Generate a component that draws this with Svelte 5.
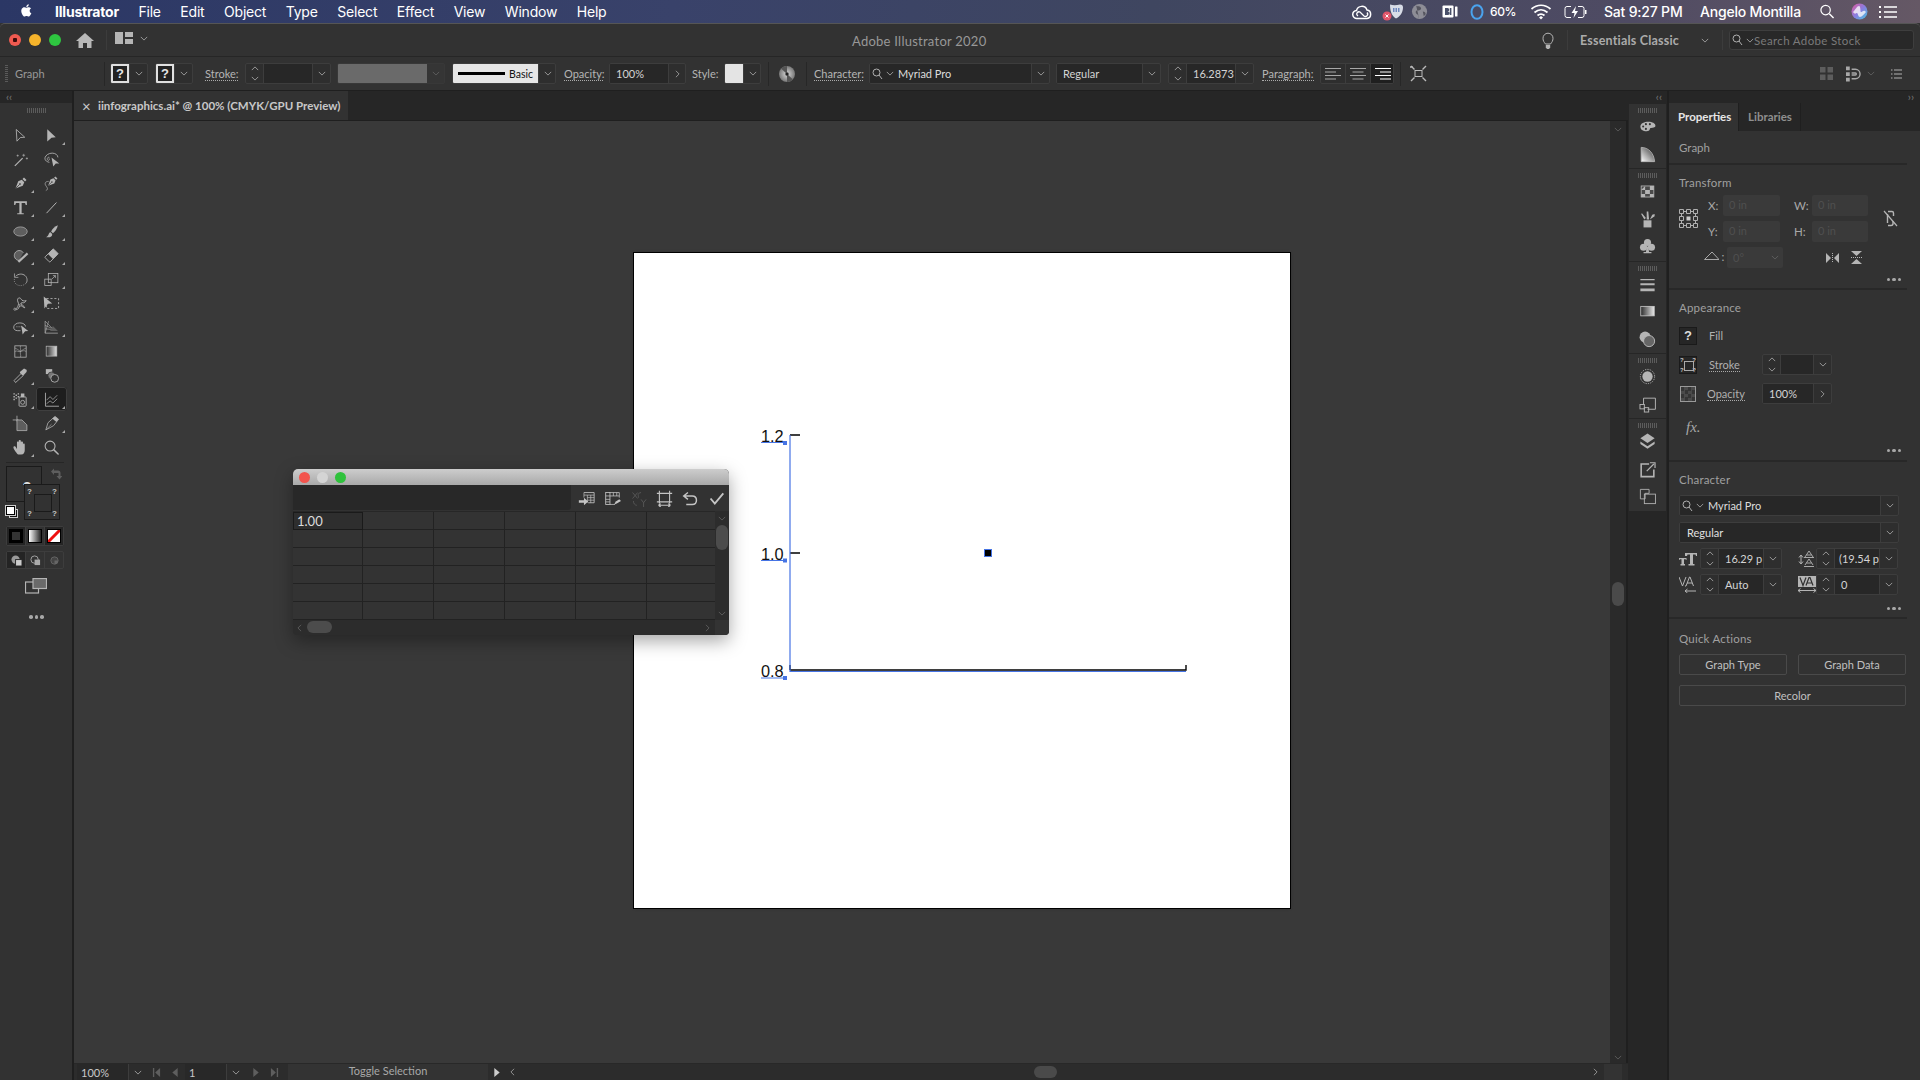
<script>
  const fs = 'fill="currentColor"';
  const st = 'fill="none" stroke="currentColor"';
  const pen = `<g transform="rotate(45 12 12)"><path d="M12 22 7.5 12 9.5 7h5l2 5z" ${fs}/><rect x="9.5" y="2.5" width="5" height="3" ${fs}/><path d="M12 22v-8" stroke="#323232"/><circle cx="12" cy="13" r="1.2" fill="#323232"/></g>`;
  const tools = [
    { svg: `<path d="M6 3.5 18 14.5l-6.2.4L7 20z" ${st} stroke-width="1.2"/>` },
    { svg: `<path d="M6 3 18 14.5l-6 .5-6 5.5z" ${fs}/>`, fly: true },
    { svg: `<path d="M4 21 15 10" ${st} stroke-width="1.7"/><path d="M16.5 4v4M14.5 6h4M8 5v3M6.5 6.5h3M21 9v3M19.5 10.5h3" ${st} stroke-width=".9"/>` },
    { svg: `<path d="M9 16C4 15 2 12 3 9s5-6 10-6 8 3 8 6" ${st} stroke-width="1.2"/><path d="M9 9c-3-1-4 3-2 4s3-2 1-3" ${st}/><path d="M12 9 23 17.5l-5 .3-3.5 4.2z" ${fs}/>` },
    { svg: pen, fly: true },
    { svg: `<g transform="translate(3 -1) scale(.85)">${pen}</g><path d="M8 9C3 9 2 12 4 15s4 5 0 7" ${st}/>` },
    { svg: `<path d="M3 3h18v5.5h-1.6l-1-3H13.6V20h3v1.6H7.4V20h3V5.5H5.6l-1 3H3z" ${fs}/>`, fly: true },
    { svg: `<path d="M5 20 19 5" ${st} stroke-width="1.4"/>`, fly: true },
    { svg: `<ellipse cx="12" cy="12" rx="9.5" ry="6.5" fill="#5e5e5e" stroke="currentColor"/>`, fly: true },
    { svg: `<path d="M21 3c-4 1-8 5-9.5 9l2.5 2.5C17 12 20 8 21 3z" ${fs}/><path d="M10.5 13c-3 1-2 5-6 7 5 1 9-1 8.5-4.500z" ${fs}/>`, fly: true },
    { svg: `<path d="M16 8a7 7 0 1 0-6 11" fill="#5e5e5e" stroke="currentColor" stroke-width="1.2"/><path d="M9 21 22 9" ${st} stroke-width="3"/>`, fly: true },
    { svg: `<g transform="rotate(-45 12 12)"><rect x="3.500" y="7" width="17" height="10" rx="1" ${st} stroke-width="1.2"/><path d="M10 7h10.500v10H10z" ${fs}/></g>`, fly: true },
    { svg: `<path d="M5 7.500C9 3.500 15 3.500 18.500 6.500s3.500 8.500 1 11" ${st} stroke-width="1.2"/><path d="M19 18c-3 3-9 3.500-12.500 1S2.500 13 4 10" ${st} stroke-dasharray="1.2 1.800"/><path d="M3.500 3.500V9H9" ${st}/>`, fly: true },
    { svg: `<rect x="2.500" y="11.500" width="9" height="9" ${st} stroke-width="1.1"/><rect x="7.500" y="3.500" width="13.500" height="13" ${st} stroke-width="1.1"/><path d="M12.500 11.500l5-5M14 6.500h3.500V10" ${st}/>`, fly: true },
    { svg: `<path d="M3 20c3 1 5-3 6-6s-2-5-1-8 4-2 5 0 4 3 7 2c-1 2-3 3-4 3s-3-1-3 1 4 3 5 6c-2 0-4-3-6-3s-2 4-4 5-4 1-5 0z" ${st} stroke-width="1.3"/><circle cx="4" cy="20" r="1.500" fill="#323232" stroke="currentColor"/><circle cx="12" cy="14" r="1.500" fill="#323232" stroke="currentColor"/>`, fly: true },
    { svg: `<rect x="5" y="5" width="17" height="14" ${st} stroke-dasharray="3 2.500" stroke-width="1.2"/><path d="M1 2 13 12l-6 .5L2 19z" ${fs}/>` },
    { svg: `<path d="M12 16.500H8C4 16.500 2 14 2.500 11S6 5.500 11 5.500s8 2.500 8 5" ${st} stroke-width="1.2"/><circle cx="7" cy="11" r=".8" ${fs}/><circle cx="10" cy="11" r=".8" ${fs}/><circle cx="13" cy="11" r=".8" ${fs}/><path d="M13 9 23 17l-4.500.4L15 22z" ${fs}/>`, fly: true },
    { svg: `<path d="M3 3v17h18" ${st}/><path d="M3 3 13 13M8 3l-5 17M3 9l9 4M3 14l14 1" ${st} stroke-width=".8"/><path d="M14 10 21 17H10z" fill="#5e5e5e"/>`, fly: true },
    { svg: `<rect x="4" y="4" width="16" height="16" ${st} stroke-width="1.1"/><path d="M12 4c-1 3 1 5 0 8s1 5 0 8M4 12c3-2 5 1 8 0s5-2 8 0M4 7c3 1 5 3 8 5M20 7c-3 1-5 3-8 5" ${st} stroke-width=".8"/>` },
    { svg: `<defs><linearGradient id="tg"><stop offset="0" stop-color="#2a2a2a"/><stop offset="1" stop-color="#e0e0e0"/></linearGradient></defs><rect x="4.500" y="4.500" width="15" height="14" fill="url(#tg)" stroke="#bbb"/>` },
    { svg: `<path d="M5 22 3 19 13 9l3 3z" ${st} stroke-width="1.200"/><path d="M12 6.500 17 2l2 1 2 2-.500 2L17 11l-2 1-4-4z" ${fs}/>`, fly: true },
    { svg: `<path d="M4 3h9v7H4z" ${fs}/><circle cx="12" cy="12" r="5" fill="#777" stroke="#323232"/><circle cx="16.500" cy="16" r="5.500" fill="#323232" stroke="currentColor" stroke-width="1.200"/>` },
    { svg: `<path d="M2 7h2v2H2zM5 5h2v2H5zM8 7h2v2H8zM5 9h2v2H5zM2 11h2v2H2zM2 3h2v2H2zM8 3h2v2H8z" ${fs}/><rect x="10" y="8.500" width="10" height="13" rx="1" ${st} stroke-width="1.300"/><circle cx="15" cy="16" r="2.800" ${st} stroke-width="1.200"/><path d="M12.500 3.500h5v5h-5z" ${fs}/>`, fly: true },
    { svg: `<path d="M3.500 2.500v19h19" ${st} stroke-width="1.200"/><path d="M5 13l5-5 4 4 6-6M5 18l5-4 4 3 6-6" ${st}/>`, fly: true, active: true },
    { svg: `<path d="M1 7h8M7 1v8" ${st} stroke-width="1.100"/><path d="M7 7h7l7 7v8H7z" fill="#5e5e5e" stroke="currentColor" stroke-width="1.100"/>` },
    { svg: `<path d="M4 21 7 11 17 2l5 4-7 9z" ${st} stroke-width="1.100"/><path d="M13 5 17 2l5 4-3 4z" ${fs}/><path d="M5 20l7-7" ${st} stroke-width=".8"/>`, fly: true },
    { svg: `<path d="M7 20c-2-2-5-6-5-8s2-2 3-1l2 3V5c0-2 2.500-2 2.500 0V3c0-2 3-2 3 0v2c0-2 3-2 3 0v3c0-2 2.500-2 2.500 0v8c0 3-1.500 6-5 6h-3c-1.500 0-2.500-1-3.500-2z" ${fs}/>`, fly: true },
    { svg: `<circle cx="10" cy="10" r="7" ${st} stroke-width="1.500"/><path d="M15 15l7 7" ${st} stroke-width="2"/>` }
  ];
  const dockGroups = [
    [
      `<path d="M3 12c0-4 5-6 10-6s9 2 9 5-4 2-6 3 0 4-5 4-8-2-8-6z" ${fs}/><circle cx="15" cy="9" r="1.300" fill="#323232"/><circle cx="10" cy="9" r="1.300" fill="#323232"/><circle cx="6.500" cy="12" r="1.300" fill="#323232"/><circle cx="10" cy="15" r="1.300" fill="#323232"/>`,
      `<defs><linearGradient id="fan" x1="0" y1="1" x2="1" y2="0"><stop offset="0" stop-color="#fff"/><stop offset="1" stop-color="#333"/></linearGradient></defs><path d="M4 3c9 0 16 7 17 18H4z" fill="url(#fan)" stroke="#bbb"/>`
    ],
    [
      `<rect x="4" y="5" width="16" height="14" fill="#4a4a4a" stroke="#bbb"/><path d="M9 5v5H4zM15 10h5V5h-5zM4 15h5v4H4zM9 10h6v5H9zM15 15h5v4h-5z" ${fs}/>`,
      `<path d="M7 13h10v9H7z" ${fs}/><path d="M8 12 4 5l1-1 5 6zM11 12 11 2h2l1 10zM15 12l3-6 3-1 0 3z" ${fs}/>`,
      `<circle cx="12" cy="7" r="4.500" ${fs}/><circle cx="7" cy="13" r="4.500" ${fs}/><circle cx="17" cy="13" r="4.500" ${fs}/><path d="M11 12h2l1 7h3v1.500H7V19h3z" ${fs}/>`
    ],
    [
      `<path d="M3 5h18v1.500H3zM3 10.500h18v2.500H3zM3 17h18v3.500H3z" ${fs}/>`,
      `<defs><linearGradient id="dg"><stop offset="0" stop-color="#2a2a2a"/><stop offset="1" stop-color="#e8e8e8"/></linearGradient></defs><rect x="3.500" y="5.500" width="17" height="12" fill="url(#dg)" stroke="#ccc"/>`,
      `<circle cx="9" cy="9" r="7" ${fs}/><circle cx="14" cy="14" r="7" fill="#666" stroke="#bbb" stroke-width="1.200"/>`
    ],
    [
      `<circle cx="12" cy="12" r="6.500" ${fs}/><circle cx="12" cy="12" r="9" ${st} stroke-dasharray="1.500 1.500" stroke-width="1.200"/>`,
      `<path d="M7 4h15v14H12" ${st} stroke-width="1.200"/><path d="M7 4v8" ${st} stroke-width="1.200"/><rect x="2.500" y="12" width="5.500" height="5.500" ${st} stroke-width="1.200"/><rect x="8" y="16" width="5.500" height="5.500" ${st} stroke-width="1.200"/>`
    ],
    [
      `<path d="M12 2 21 8l-9 6-9-6z" ${fs}/><path d="M3 12l9 6 9-6v3l-9 6-9-6z" ${fs}/>`,
      `<path d="M14 5H4v16h16V12" ${st} stroke-width="2"/><path d="M11 14 20 5M15 3.500h6.500V10" ${st} stroke-width="1.500"/>`,
      `<path d="M3 3h11v5H9v7H3z" ${st} stroke-width="1.100"/><rect x="8" y="9" width="14" height="12" ${st} stroke-width="1.100"/>`
    ]
  ];
  const gridRows = Array.from({ length: 6 }, (_, r) => r);
  const gridCols = Array.from({ length: 6 }, (_, c) => c);
  const gwIcons = [
    { svg: `<path d="M7 3h12v12H12" ${st}/><path d="M7 3v6M7 6h12M11 6v9M15 6v9M11 9h8M11 12h8" ${st} stroke-width=".8"/><path d="M1 12h6V9l5 4.500L7 18v-3H1z" ${fs}/>` },
    { svg: `<rect x="2" y="3" width="5" height="14" ${st}/><path d="M7 3h11v6M7 17h6M7 7h11M2 7h5M2 11h5M2 14h5M11 3v4M15 3v4" ${st} stroke-width=".9"/><path d="M13 14l5-3 2 2-5 3zM12 17l1.500-3 1.500 2z" ${fs}/>` },
    { svg: `<path d="M3 3l6 7M9 3l-6 7M13 11l3 4 3-4M16 15v5M4 13c0 3 2 5 4 5M10 9c0-3-2-5 3-6" ${st}/>`, dim: true },
    { svg: `<path d="M1 4h18M1 14h18M4 1v15M16 1v15M3 18h14M3 18l2.500-2M3 18l2.500 2M17 18l-2.500-2M17 18l-2.500 2" ${st} stroke-width="1.300"/>` },
    { svg: `<path d="M7 3 2 7l5 4M2 7h10c4 0 5 3 5 5s-1 5-5 5H5" ${st} stroke-width="1.700"/>` },
    { svg: `<path d="M3 10l5 6L18 4" ${st} stroke-width="2.200"/>` }
  ];
</script>

{#snippet chev(dim)}
  <svg class="chev" class:dimc={dim} viewBox="0 0 10 6"><path d="M1 1l4 4 4-4" /></svg>
{/snippet}
{#snippet spin()}
  <span class="spin"><svg class="chev" viewBox="0 0 10 6"><path d="M1 5l4-4 4 4" /></svg><svg class="chev" viewBox="0 0 10 6"><path d="M1 1l4 4 4-4" /></svg></span>
{/snippet}
{#snippet dots()}
  <div class="dots"><i></i><i></i><i></i></div>
{/snippet}
{#snippet mag()}
  <span class="mag"><svg viewBox="0 0 13 12"><circle cx="4.500" cy="4.500" r="3.500" /><path d="M7 7l3 4" /></svg>{@render chev()}</span>
{/snippet}
{#snippet qbox()}
  <span class="qbox">?</span>
{/snippet}
{#snippet grip()}
  <div class="grip"></div>
{/snippet}

<div class="app">
  <header class="menubar">
    <svg class="apple" viewBox="0 0 24 24"><path d="M17.050 12.540c-.03-2.500 2.040-3.700 2.130-3.760-1.160-1.700-2.970-1.930-3.610-1.960-1.540-.16-3 .9-3.780.9-.78 0-1.980-.88-3.260-.86-1.680.03-3.220.98-4.090 2.480-1.740 3.030-.45 7.500 1.250 9.950.83 1.200 1.820 2.550 3.120 2.500 1.250-.05 1.730-.81 3.240-.81 1.510 0 1.940.81 3.270.78 1.350-.02 2.200-1.220 3.020-2.430.95-1.390 1.340-2.740 1.370-2.810-.03-.01-2.630-1.010-2.660-4M14.600 5.170c.69-.84 1.150-2 1.030-3.170-.99.04-2.200.66-2.910 1.500-.64.74-1.200 1.930-1.050 3.060 1.110.09 2.240-.56 2.930-1.390" /></svg>
    <nav class="menus">
      <b>Illustrator</b><span>File</span><span>Edit</span><span>Object</span><span>Type</span><span>Select</span><span>Effect</span><span>View</span><span>Window</span><span>Help</span>
    </nav>
    <div class="extras">
      <svg class="x20" viewBox="0 0 20 16"><path d="M5 14.500a4 4 0 0 1-.5-8A5.500 5.500 0 0 1 15 6a4.300 4.300 0 0 1 0 8.500z" fill="none" stroke="#fff" stroke-width="1.500" /><path d="M6 12c-3-2 0-5 2-4l4 4c2 1.500 5-1 3-3.500" fill="none" stroke="#fff" stroke-width="1.300" /></svg>
      <svg class="x23 ml10" viewBox="0 0 23 18"><path d="M8 1.500c3 1 6 1 10 0 2 0 3 1 3 3 0 5-3 9-7 11-3-2-6-5-6-14z" fill="#d8dce6" /><path d="M11 6h7M11 8h7" stroke="#4b6bb0" stroke-width="1.500" stroke-dasharray="1.500 1" /><circle cx="5" cy="13" r="4.500" fill="#e0556a" /><path d="M3.500 11.500l3 3M6.500 11.500l-3 3" stroke="#fff" /></svg>
      <svg class="x17 ml6" viewBox="0 0 17 18"><circle cx="8.500" cy="9" r="8" fill="#8d8d96" /><path d="M5 3c2 1 4 0 5 2s-2 3-4 3-2 3 0 4 1 3 2 4M12 9c2 0 3 1 3 3l-2 2z" fill="#55555f" /></svg>
      <svg class="x16 ml14" viewBox="0 0 16 14"><rect x="0.500" y="1" width="11" height="12" rx="1" fill="#fff" /><path d="M3 3.500h2.500a1.400 1.400 0 0 1 0 3.500H3zM3 7h3a1.500 1.500 0 0 1 0 3.500H3z" fill="#49506a" /><rect x="7.800" y="3.500" width="1.600" height="7" fill="#49506a" /><rect x="13" y="2" width="2.500" height="10" rx=".5" fill="#fff" /></svg>
      <svg class="x14 ml12" viewBox="0 0 14 18"><ellipse cx="7" cy="9" rx="5.500" ry="6.800" fill="none" stroke="#4aa3ee" stroke-width="2" /></svg>
      <span class="xt t25 ml6">60%</span>
      <svg class="x22 ml15" viewBox="0 0 22 17"><path d="M1.500 6C7 1 15 1 20.500 6M4.500 9.500c4-3.500 9-3.500 13 0M7.500 12.500c2-1.700 5-1.700 7 0" fill="none" stroke="#fff" stroke-width="1.700" /><path d="M9 14.500l2-1.500 2 1.500-2 2z" fill="#fff" /></svg>
      <svg class="x23 ml12" viewBox="0 0 23 14"><path d="M7 1.500H3a2 2 0 0 0-2 2v7a2 2 0 0 0 2 2h4M14 1.500h4a2 2 0 0 1 2 2v7a2 2 0 0 1-2 2h-4" fill="none" stroke="#fff" /><path d="M12 1 7.500 8h3l-1 5 4.500-7h-3z" fill="#fff" /><rect x="21" y="5" width="1.500" height="4" fill="#fff" /></svg>
      <span class="xt t79 ml17">Sat 9:27 PM</span>
      <span class="xt t102 ml17">Angelo Montilla</span>
      <svg class="x16 ml17" viewBox="0 0 16 16"><circle cx="6.500" cy="6.500" r="5" fill="none" stroke="#fff" stroke-width="1.300" /><path d="M10.500 10.500 15 15" stroke="#fff" stroke-width="1.500" /></svg>
      <svg class="x17 ml16" viewBox="0 0 17 17"><defs><linearGradient id="siri" x1="0" y1="0" x2="1" y2="1"><stop offset="0" stop-color="#e05a9a" /><stop offset=".5" stop-color="#8a7de0" /><stop offset="1" stop-color="#45c4e0" /></linearGradient></defs><circle cx="8.500" cy="8.500" r="8" fill="url(#siri)" /><path d="M2 9c3-3 4-6 6-6s1 6 2 6 3-3 5 0c-2 2-4 5-6 5s-2-4-3-4-2 2-4-1z" fill="#fff" opacity=".75" /></svg>
      <svg class="x18 ml11" viewBox="0 0 18 14"><path d="M5 2h13M5 7h13M5 12h13" stroke="#fff" stroke-width="1.600" /><path d="M0 2h2M0 7h2M0 12h2" stroke="#fff" stroke-width="1.800" /></svg>
    </div>
  </header>

  <div class="titlebar">
    <div class="lights"><i class="red"></i><i class="amber"></i><i class="green"></i></div>
    <svg class="home" viewBox="0 0 18 15"><path d="M9 0 0 8h2.500v7H7v-5h4v5h4.500V8H18z" /></svg>
    <span class="tsep homesep"></span>
    <svg class="layout" viewBox="0 0 18 12"><path d="M0 0h8v12H0zM10 0h8v5h-8zM10 7h8v5h-8z" /></svg>
    <span class="layoutchev">{@render chev()}</span>
    <span class="apptitle">Adobe Illustrator 2020</span>
    <div class="tright">
      <svg class="bulb" viewBox="0 0 12 17"><path d="M3.500 12C2 10 1 9 1 6.200a5 5 0 0 1 10 0C11 9 10 10 8.500 12z" fill="none" stroke="#b5b5b5" /><path d="M3.800 13h4.400v2.500L7 17H5l-1.200-1.500z" fill="#b5b5b5" /></svg>
      <span class="tsep esep1"></span>
      <b class="essentials">Essentials Classic</b>
      <span class="echev">{@render chev()}</span>
      <span class="tsep esep2"></span>
      <div class="stock">{@render mag()}<span>Search Adobe Stock</span></div>
    </div>
  </div>

  <div class="controlbar">
    <span class="cgrip"></span>
    <span class="lab graphlab">Graph</span>
    <span class="csep"></span>
    <div class="ctl ml5 w38">{@render qbox()}<span class="cell c18">{@render chev()}</span></div>
    <div class="ctl ml7 w38">{@render qbox()}<span class="cell c18">{@render chev()}</span></div>
    <span class="lab ul ml12 w33">Stroke:</span>
    <div class="ctl ml7 w86"><span class="cell c18">{@render spin()}</span><span class="cell inp grow"></span><span class="cell c18">{@render chev()}</span></div>
    <div class="ctl ml6 w108 flat"><span class="gray"></span><span class="cell c18 off">{@render chev(true)}</span></div>
    <div class="ctl ml7 w104"><span class="basic"><i></i>Basic</span><span class="cell c18">{@render chev()}</span></div>
    <span class="lab ul ml8 w39">Opacity:</span>
    <div class="ctl ml6 w77"><span class="cell inp grow val">100%</span><span class="cell c17"><svg class="chev side" viewBox="0 0 6 10"><path d="M1 1l4 4-4 4" /></svg></span></div>
    <span class="lab ml6 w25">Style:</span>
    <div class="ctl ml7 w37"><span class="white"></span><span class="cell c18">{@render chev()}</span></div>
    <span class="csep ml7"></span>
    <svg class="ml10 disc" viewBox="0 0 16 16"><defs><radialGradient id="disc"><stop offset="0" stop-color="#444" /><stop offset=".3" stop-color="#bbb" /><stop offset="1" stop-color="#777" /></radialGradient></defs><circle cx="8" cy="8" r="8" fill="url(#disc)" /><path d="M8 8 2 2.500A8 8 0 0 1 8 0zM8 8l6 5.500A8 8 0 0 1 8 16z" fill="#555" /><circle cx="8" cy="8" r="1.500" fill="#222" /></svg>
    <span class="csep ml11"></span>
    <span class="lab ul ml7 w49">Character:</span>
    <div class="ctl ml6 w181"><span class="cell inp grow">{@render mag()}<span class="fontname">Myriad Pro</span></span><span class="cell c18">{@render chev()}</span></div>
    <div class="ctl ml6 w105"><span class="cell inp grow val">Regular</span><span class="cell c18">{@render chev()}</span></div>
    <div class="ctl ml7 w86"><span class="cell c18">{@render spin()}</span><span class="cell inp grow val">16.2873</span><span class="cell c18">{@render chev()}</span></div>
    <span class="lab ul ml8 w52">Paragraph:</span>
    <div class="ctl ml6 w74">
      <span class="acell"><svg viewBox="0 0 16 12"><path d="M0 .5h16M0 4h11M0 7.500h16M0 11h11" /></svg></span>
      <span class="acell"><svg viewBox="0 0 16 12"><path d="M0 .5h16M2.500 4h11M0 7.500h16M2.500 11h11" /></svg></span>
      <span class="acell on"><svg viewBox="0 0 16 12"><path d="M0 .5h16M5 4h11M0 7.500h16M5 11h11" /></svg></span>
    </div>
    <span class="csep ml6"></span>
    <svg class="ml9 tfm" viewBox="0 0 17 17"><rect x="5" y="5.500" width="7" height="6" fill="none" stroke="#bbb" /><path d="M0 2l3 0M1 1l3.500 3.500M16 1l-3.500 3.500M1 16l3.500-3.500M16 16l-3.500-3.500" stroke="#bbb" stroke-width="1.400" /></svg>
    <div class="cright">
      <svg class="ci15" viewBox="0 0 15 15"><path d="M1 1h5.500v5.500H1zM8.500 1H14v5.500H8.500zM1 8.500h5.500V14H1zM8.500 8.500H14V14H8.500z" fill="#5d5d5d" /></svg>
      <svg class="ci16 ml12" viewBox="0 0 16 16"><path d="M0 0h4v4H0zM0 6h4v4H0zM0 12h4v4H0z" fill="#a8a8a8" /><path d="M6 3h4a5 5 0 0 1 0 10H6M6 7h4a1 1 0 0 1 0 2H6" fill="none" stroke="#a8a8a8" stroke-width="1.500" /></svg>
      <span class="ml6 cdim">{@render chev(true)}</span>
      <svg class="ci10 ml16" viewBox="0 0 11 10"><path d="M0 1h1.500M0 5h1.500M0 9h1.500M3 1h8M3 5h8M3 9h8" stroke="#b0b0b0" /></svg>
    </div>
  </div>

  <div class="workspace">
    <aside class="toolbar">
      <div class="collapsehead left">&lsaquo;&lsaquo;</div>
      <div class="toolgrip">{@render grip()}</div>
      <div class="tools">
        {#each tools as t}
          <div class="tool" class:active={t.active} class:fly={t.fly}><svg viewBox="0 0 24 24">{@html t.svg}</svg></div>
        {/each}
      </div>
      <div class="toolsep"></div>
      <div class="fillstroke">
        <div class="fillbox">?</div>
        <svg class="swap" viewBox="0 0 12 12"><path d="M1 3.500 4 .5v2h4a2.500 2.500 0 0 1 2.500 2.500v3h2l-3 3.500-3-3.500h2V5H4v2z" fill="#5e5e5e" /></svg>
        <div class="strokebox"><span class="q q1">?</span><span class="q q2">?</span><span class="q q3">?</span><span class="q q4">?</span><i></i></div>
        <div class="defaults"><b></b><i></i></div>
      </div>
      <div class="moderow colors">
        <span class="mcell on"><i class="m-color"></i></span>
        <span class="mcell"><i class="m-grad"></i></span>
        <span class="mcell on"><svg viewBox="0 0 12 12"><rect width="12" height="12" fill="#fff" /><path d="M0 12 12 0" stroke="#e11" stroke-width="3" /></svg></span>
      </div>
      <div class="moderow draws">
        <span class="mcell on"><svg viewBox="0 0 12 12"><circle cx="5" cy="5" r="4.500" fill="#999" /><rect x="5" y="5" width="7" height="7" fill="#ccc" stroke="#222" /></svg></span>
        <span class="mcell"><svg viewBox="0 0 12 12"><circle cx="5" cy="5" r="4" fill="none" stroke="#aaa" /><rect x="5" y="5" width="6" height="6" fill="#aaa" /></svg></span>
        <span class="mcell"><svg viewBox="0 0 12 12"><circle cx="6" cy="6" r="4" fill="#444" stroke="#666" /><path d="M6 6h4a4 4 0 0 1-4 4z" fill="#666" /></svg></span>
      </div>
      <svg class="screen" viewBox="0 0 22 16"><rect x="0.500" y="4" width="13" height="11" fill="none" stroke="#b5b5b5" stroke-width="1.200" /><rect x="8" y="0.500" width="13.500" height="10" fill="#6a6a6a" stroke="#b5b5b5" stroke-width="1.200" /></svg>
      <div class="tooldots">{@render dots()}</div>
    </aside>

    <main class="center">
      <div class="tabrow">
        <div class="tab"><span class="tabx">&times;</span>iinfographics.ai* @ 100% (CMYK/GPU Preview)</div>
      </div>
      <div class="stage">
        <div class="canvas">
          <div class="artboard">
            <svg class="graph" viewBox="634 253 656 655">
              <g font-family="Liberation Sans, sans-serif" font-size="16.300" fill="#111">
                <text x="761" y="442">1.2</text>
                <text x="761" y="560">1.0</text>
                <text x="761" y="677">0.8</text>
              </g>
              <path d="M790 435h10M790 553h10M790 670H1186V665M790 665v5" fill="none" stroke="#000" stroke-width="1.400" />
              <path d="M790 435V671.500H1186M761 442.500h24M761 560.500h24M761 678h24" fill="none" stroke="#4674e4" stroke-width="1.200" />
              <path d="M783 441h4v4h-4zM783 558.500h4v4h-4zM783 676h4v4h-4z" fill="#4674e4" />
              <rect x="984.500" y="549.500" width="7" height="7" fill="#000" stroke="#4674e4" />
            </svg>
          </div>
          <section class="gw">
            <div class="gw-title"><i class="r"></i><i class="g0"></i><i class="g1"></i></div>
            <div class="gw-tools">
              <div class="gw-input"></div>
              <div class="gw-icons">
                {#each gwIcons as ic}
                  <span class="gw-ic" class:dimic={ic.dim}><svg viewBox="0 0 20 20">{@html ic.svg}</svg></span>
                {/each}
              </div>
            </div>
            <div class="gw-body">
              <div class="gw-table">
                {#each gridRows as r}
                  {#each gridCols as c}
                    <div class="gcell" class:sel={r === 0 && c === 0}>{r === 0 && c === 0 ? '1.00' : ''}</div>
                  {/each}
                {/each}
              </div>
              <div class="gw-v">
                {@render chev(true)}
                <span class="vthumb"></span>
                <span class="vdown">{@render chev(true)}</span>
              </div>
            </div>
            <div class="gw-foot">
              <div class="gw-h">
                <svg class="side" viewBox="0 0 6 10"><path d="M5 1 1 5l4 4" /></svg>
                <span class="hthumb"></span>
                <svg class="side last" viewBox="0 0 6 10"><path d="M1 1l4 4-4 4" /></svg>
              </div>
            </div>
          </section>
        </div>
        <div class="vscroll">
          {@render chev(true)}
          <span class="vs-thumb"></span>
          <span class="vs-down">{@render chev(true)}</span>
        </div>
      </div>
      <footer class="status">
        <div class="zoombox">100%</div>
        <div class="sb-chev">{@render chev()}</div>
        <svg class="nav nav1" viewBox="0 0 10 10"><path d="M1 0h1.500v10H1zM9 0v10L3.500 5z" /></svg>
        <svg class="nav nav2" viewBox="0 0 6 10"><path d="M6 0v10L0 5z" /></svg>
        <div class="pagebox">1</div>
        <div class="sb-chev narrow">{@render chev()}</div>
        <svg class="nav nav3" viewBox="0 0 6 10"><path d="M0 0v10l6-5z" /></svg>
        <svg class="nav nav4" viewBox="0 0 10 10"><path d="M9 0H7.500v10H9zM1 0v10l5.500-5z" /></svg>
        <div class="toggle">Toggle Selection</div>
        <svg class="nav play" viewBox="0 0 6 10"><path d="M0 0v10l6-5z" /></svg>
        <div class="hscroll">
          <svg class="side" viewBox="0 0 6 10"><path d="M5 1 1 5l4 4" /></svg>
          <span class="hs-thumb"></span>
          <svg class="side" viewBox="0 0 6 10"><path d="M1 1l4 4-4 4" /></svg>
        </div>
        <div class="corner"></div>
      </footer>
    </main>

    <aside class="dock">
      <div class="collapsehead">&lsaquo;&lsaquo;</div>
      {#each dockGroups as group}
        <div class="dgroup">
          {@render grip()}
          {#each group as ic}
            <div class="dicon"><svg viewBox="0 0 24 24">{@html ic}</svg></div>
          {/each}
        </div>
      {/each}
    </aside>

    <aside class="panel">
      <div class="phead">&rsaquo;&rsaquo;</div>
      <div class="ptabs"><span class="ptab on">Properties</span><span class="ptab">Libraries</span></div>
      <div class="pbody">
        <div class="pgraph">Graph</div>
        <div class="psep"></div>

        <section class="sec transform">
          <h4>Transform</h4>
          <div class="tf">
            <svg class="refpt" viewBox="0 0 19 19"><g fill="none" stroke="#b0b0b0"><path d="M.5.5h4v4h-4zM7.500.5h4v4h-4zM14.500.5h4v4h-4zM.5 7.500h4v4h-4zM14.500 7.500h4v4h-4zM.5 14.500h4v4h-4zM7.500 14.500h4v4h-4zM14.500 14.500h4v4h-4z" /><path d="M4.500 2.500h3M11.500 2.500h3M4.500 16.500h3M11.500 16.500h3M2.500 4.500v3M2.500 11.500v3M16.500 4.500v3M16.500 11.500v3" /></g><rect x="7.500" y="7.500" width="4" height="4" fill="#ccc" /></svg>
            <div class="tf-col">
              <div class="tf-row"><span class="tl">X:</span><span class="dbox">0 in</span><span class="tl wl">W:</span><span class="dbox w56">0 in</span></div>
              <div class="tf-row"><span class="tl">Y:</span><span class="dbox">0 in</span><span class="tl wl">H:</span><span class="dbox w56">0 in</span></div>
            </div>
            <svg class="linkic" viewBox="0 0 15 17"><path d="M5 1.500h4a1.500 1.500 0 0 1 1.500 1.500v3M5 15.500h3a2 2 0 0 0 2-2V11M4.500 4v9" fill="none" stroke="#b5b5b5" stroke-width="1.400" /><path d="M1 1l13 15" stroke="#b5b5b5" stroke-width="1.200" /></svg>
          </div>
          <div class="tf3">
            <svg class="angle" viewBox="0 0 15 9"><path d="M.5 8.500H15L8 1z" fill="none" stroke="#a8a8a8" /></svg>
            <span class="tl colon">:</span>
            <span class="dbox ang">0&deg;{@render chev(true)}</span>
            <svg class="flip f1" viewBox="0 0 13 10"><path d="M0 0v10l5-5z M13 0v10L8 5z" fill="#b5b5b5" /><path d="M6.500 0v10" stroke="#b5b5b5" stroke-dasharray="1 1" /></svg>
            <svg class="flip f2" viewBox="0 0 11 13"><path d="M0 0h11L5.500 5zM0 13h11L5.500 8z" fill="#b5b5b5" /><path d="M0 6.500h11" stroke="#b5b5b5" stroke-dasharray="1 1" /></svg>
          </div>
          {@render dots()}
        </section>
        <div class="psep"></div>

        <section class="sec appearance">
          <h4>Appearance</h4>
          <div class="ap-row">
            <span class="apq">?</span><span class="aplab">Fill</span>
          </div>
          <div class="ap-row">
            <span class="apstroke"><span class="q q1">?</span><span class="q q2">?</span><span class="q q3">?</span><span class="q q4">?</span><i></i></span>
            <span class="aplab ul">Stroke</span>
            <div class="ctl w70 apctl"><span class="cell c18">{@render spin()}</span><span class="cell inp grow"></span><span class="cell c18">{@render chev()}</span></div>
          </div>
          <div class="ap-row">
            <span class="checker"></span>
            <span class="aplab ul">Opacity</span>
            <div class="ctl w70 apctl"><span class="cell inp grow val">100%</span><span class="cell c18"><svg class="chev side" viewBox="0 0 6 10"><path d="M1 1l4 4-4 4" /></svg></span></div>
          </div>
          <div class="fx"><em>fx</em><span>.</span></div>
          {@render dots()}
        </section>
        <div class="psep"></div>

        <section class="sec character">
          <h4>Character</h4>
          <div class="ctl wide"><span class="cell inp grow">{@render mag()}<span class="fontname">Myriad Pro</span></span><span class="cell c18">{@render chev()}</span></div>
          <div class="ctl wide"><span class="cell inp grow val strong">Regular</span><span class="cell c18">{@render chev()}</span></div>
          <div class="chgrid">
            <svg class="chic" viewBox="0 0 18 15"><path d="M6 2h12v3h-1l-.5-1.500h-2.500v9.500h1.500v1.500h-6V13H11V3.500H8.500L8 5H6zM0 7h7.500v2H7l-.3-.8H5V13h1v1.500H1.500V13h1V8.200H.8L.5 9H0z" fill="#b5b5b5" /></svg>
            <div class="ctl w82"><span class="cell c18">{@render spin()}</span><span class="cell inp grow val">16.29 p</span><span class="cell c18">{@render chev()}</span></div>
            <svg class="chic lead" viewBox="0 0 18 17"><path d="M3 6v7M1 7.500 3 5l2 2.500M1 11.500 3 14l2-2.500" fill="none" stroke="#b5b5b5" /><path d="M7 7l4-6 4 6M8.500 5h5M7 15l4-6 4 6M8.500 13h5M6 16.500h10M6 7.500h10" fill="none" stroke="#b5b5b5" stroke-width=".9" /></svg>
            <div class="ctl w82"><span class="cell c18">{@render spin()}</span><span class="cell inp grow val clip">(19.54 pt)</span><span class="cell c18">{@render chev()}</span></div>

            <svg class="chic" viewBox="0 0 18 17"><path d="M0 1l3.500 9L7 1M6 10l1 0 3.500-9h.5l3.500 9M8 7h5" fill="none" stroke="#b5b5b5" /><path d="M6 15h11M6 15l2.500-2M6 15l2.500 2" fill="none" stroke="#b5b5b5" /></svg>
            <div class="ctl w82"><span class="cell c18">{@render spin()}</span><span class="cell inp grow val">Auto</span><span class="cell c18">{@render chev()}</span></div>
            <svg class="chic lead" viewBox="0 0 18 17"><rect width="18" height="11" fill="#b5b5b5" /><path d="M2 1.500l3 8 3-8M8 9.500l3-8 1 0 3 8M9.500 7h4.500" fill="none" stroke="#303030" stroke-width="1.200" /><path d="M0 14.500h18M0 14.500l2.500-2M0 14.500l2.500 2M18 14.500l-2.500-2M18 14.500l-2.500 2" fill="none" stroke="#b5b5b5" /></svg>
            <div class="ctl w82"><span class="cell c18">{@render spin()}</span><span class="cell inp grow val">0</span><span class="cell c18">{@render chev()}</span></div>
          </div>
          {@render dots()}
        </section>
        <div class="psep"></div>

        <section class="sec quick">
          <h4>Quick Actions</h4>
          <div class="qa-row"><button>Graph Type</button><button>Graph Data</button></div>
          <button class="full">Recolor</button>
        </section>
      </div>
    </aside>
  </div>
</div>

<style>
  :global(body) { margin: 0; background: #323232; }
  .app { width: 1920px; height: 1080px; overflow: hidden; display: flex; flex-direction: column; font-family: "Lato", "Open Sans", sans-serif; color: #aaa; }

  /* menu bar */
  .menubar { height: 23px; flex: none; display: flex; align-items: center; background: linear-gradient(90deg, #2b3765 0%, #39426a 35%, #3f4660 60%, #4f4b63 85%, #655865 100%); color: #fff; font: 500 14px "Inter", "Liberation Sans", sans-serif; padding-left: 19px; }
  .apple { width: 15px; height: 17px; fill: #fff; flex: none; margin-top: -2px; }
  .menus { display: flex; gap: 19.500px; margin-left: 21px; letter-spacing: -.2px; white-space: nowrap; font-weight: 400; }
  .menus b { font-weight: 700; }
  .extras { margin-left: auto; margin-right: 23px; display: flex; align-items: center; height: 23px; }
  .x20 { width: 20px; height: 16px; }
  .x23 { width: 23px; height: 18px; }
  .x22 { width: 22px; height: 17px; }
  .x18 { width: 18px; height: 14px; }
  .x17 { width: 17px; height: 17px; }
  .x16 { width: 16px; height: 15px; }
  .x14 { width: 14px; height: 18px; }
  .xt { white-space: nowrap; letter-spacing: -.2px; }
  .t25 { width: 25px; font-size: 12px; letter-spacing: -.4px; }
  .t79 { width: 79px; }
  .t102 { width: 102px; }

  .ml5 { margin-left: 5px; } .ml6 { margin-left: 6px; } .ml7 { margin-left: 7px; } .ml8 { margin-left: 8px; }
  .ml9 { margin-left: 9px; } .ml10 { margin-left: 10px; } .ml11 { margin-left: 11px; } .ml12 { margin-left: 12px; }
  .ml14 { margin-left: 14px; } .ml15 { margin-left: 15px; } .ml16 { margin-left: 16px; } .ml17 { margin-left: 17px; }

  /* title bar */
  .titlebar { height: 34px; flex: none; display: flex; align-items: center; background: #323232; position: relative; border-top: 1px solid #555; border-radius: 5px 5px 0 0; box-sizing: border-box; border-bottom: 1px solid #262626; }
  .lights { display: flex; gap: 8px; margin-left: 9px; }
  .lights i { width: 12px; height: 12px; border-radius: 50%; display: block; }
  .red { background: radial-gradient(circle, #3a0b0b 0 2px, #f05a50 2.5px); }
  .amber { background: #f6b42b; }
  .green { background: #2ec640; }
  .home { width: 18px; height: 15px; fill: #b8b8b8; margin-left: 15px; }
  .tsep { width: 1px; height: 20px; background: #3c3c3c; flex: none; }
  .homesep { margin-left: 12px; }
  .layout { width: 18px; height: 12px; fill: #b5b5b5; margin-left: 8px; margin-top: -4px; }
  .layoutchev { margin-left: 7px; display: flex; margin-top: -4px; }
  .apptitle { position: absolute; left: 852px; top: 9px; font-size: 13px; color: #989898; white-space: nowrap; letter-spacing: .25px; }
  .tright { margin-left: auto; display: flex; align-items: center; padding-right: 6px; }
  .bulb { width: 12px; height: 17px; margin-right: 13px; }
  .esep1 { margin-right: 12px; }
  .essentials { font-size: 12.500px; width: 110px; white-space: nowrap; color: #ababab; letter-spacing: .2px; }
  .echev { margin-left: 11px; margin-right: 13px; display: flex; }
  .esep2 { margin-right: 6px; }
  .stock { width: 185px; height: 20px; box-sizing: border-box; background: #282828; border: 1px solid #3e3e3e; border-radius: 3px; display: flex; align-items: center; font-size: 11.500px; color: #7a7a7a; white-space: nowrap; letter-spacing: .35px; }

  .chev { width: 8px; height: 5px; fill: none; stroke: #b0b0b0; stroke-width: 1; flex: none; display: block; }
  .chev path, .side path { fill: none; }
  .dimc { stroke: #666; }
  .side { width: 5px; height: 8px; fill: none; stroke: #aaa; flex: none; }
  .spin { display: flex; flex-direction: column; gap: 5px; align-items: center; }
  .mag { display: inline-flex; align-items: center; gap: 1px; margin-left: 2px; flex: none; }
  .mag svg:first-child { width: 13px; height: 12px; fill: none; stroke: #b0b0b0; }

  /* control bar */
  .controlbar { height: 34px; flex: none; display: flex; align-items: center; background: #323232; box-sizing: border-box; border-bottom: 1px solid #1f1f1f; font-size: 11px; white-space: nowrap; }
  .cgrip { width: 3px; height: 18px; margin-left: 5px; background: repeating-linear-gradient(#5a5a5a 0 1px, transparent 1px 2px); flex: none; }
  .lab { color: #b5b5b5; flex: none; line-height: 13px; }
  .graphlab { width: 89px; margin-left: 7px; color: #999; }
  .ul { border-bottom: 1px dotted #aaa; }
  .w33 { width: 33px; } .w39 { width: 39px; } .w25 { width: 25px; } .w49 { width: 49px; } .w52 { width: 52px; }
  .csep { width: 1px; height: 24px; background: #272727; flex: none; }
  .ctl { height: 21px; flex: none; display: flex; box-sizing: border-box; border: 1px solid #3d3d3d; border-radius: 2px; background: #2e2e2e; overflow: hidden; }
  .flat { border-color: #383838; background: #353535; }
  .w38 { width: 38px; } .w86 { width: 86px; } .w108 { width: 108px; } .w104 { width: 104px; } .w77 { width: 77px; } .w37 { width: 37px; }
  .w181 { width: 181px; } .w105 { width: 105px; } .w74 { width: 74px; } .w70 { width: 70px; } .w82 { width: 82px; }
  .cell { display: flex; align-items: center; justify-content: center; box-sizing: border-box; height: 100%; flex: none; }
  .c18 { width: 18px; } .c17 { width: 17px; }
  .c18:not(:first-child), .c17:not(:first-child) { border-left: 1px solid #3d3d3d; }
  .c18:first-child { border-right: 1px solid #3d3d3d; }
  .off { border-left: 0 !important; }
  .grow { flex: 1; min-width: 0; }
  .inp { background: #272727; justify-content: flex-start; }
  .val { color: #d4d4d4; padding-left: 6px; font-size: 11px; overflow: hidden; }
  .strong { color: #e0e0e0; }
  .clip { padding-left: 4px; white-space: nowrap; }
  .fontname { color: #dcdcdc; margin-left: 4px; }
  .qbox { width: 18px; height: 19px; box-sizing: border-box; border: 2px solid #e0e0e0; background: #222; color: #e6e6e6; font: 700 13px "Liberation Sans", sans-serif; display: flex; align-items: center; justify-content: center; flex: none; }
  .gray { width: 89px; background: #6a6a6a; flex: none; }
  .basic { width: 85px; background: #e6e6e6; color: #111; display: flex; align-items: center; font-size: 10.500px; flex: none; }
  .basic i { width: 47px; height: 2.500px; background: #000; margin: 0 4px 0 5px; }
  .white { width: 18px; background: #e4e4e4; flex: none; }
  .disc { width: 16px; height: 16px; flex: none; }
  .acell { width: 24px; display: flex; align-items: center; justify-content: center; border-right: 1px solid #3d3d3d; flex: none; }
  .acell:last-child { border-right: 0; }
  .acell svg { width: 16px; height: 12px; fill: none; stroke: #a8a8a8; }
  .acell.on { background: #1f1f1f; }
  .acell.on svg { stroke: #fff; }
  .tfm { width: 17px; height: 17px; flex: none; }
  .cright { margin-left: auto; display: flex; align-items: center; padding-right: 18px; }
  .ci15 { width: 15px; height: 15px; }
  .ci16 { width: 15px; height: 16px; }
  .ci10 { width: 11px; height: 10px; }
  .cdim { display: flex; }

  /* workspace */
  .workspace { flex: 1; display: flex; min-height: 0; background: #1f1f1f; }
  .toolbar { width: 72px; flex: none; margin-right: 2px; background: #323232; display: flex; flex-direction: column; }
  .collapsehead { height: 12px; background: #262626; font-size: 11px; line-height: 11px; color: #777; padding-left: 6px; flex: none; box-sizing: border-box; }
  .toolgrip { height: 20px; padding-top: 5px; box-sizing: border-box; flex: none; }
  .grip { width: 19px; height: 5px; margin: 0 auto; background: repeating-linear-gradient(90deg, #5c5c5c 0 1px, transparent 1px 2px); }
  .tools { display: grid; grid-template-columns: 31px 31px; grid-auto-rows: 24px; padding-left: 5px; }
  .tool { display: flex; align-items: center; justify-content: center; color: #b5b5b5; position: relative; }
  .tool svg { width: 17px; height: 17px; }
  .tool.active { background: #1e1e1e; border-radius: 3px; outline: 1px solid #3f3f3f; outline-offset: -1px; }
  .tool.fly::after { content: ""; position: absolute; right: 2px; bottom: 2px; border-style: solid; border-width: 0 0 3px 3px; border-color: transparent transparent #a8a8a8 transparent; }
  .toolsep { height: 1px; background: #262626; margin: 3px 8px 0 6px; flex: none; }
  .fillstroke { height: 54px; margin-top: 3px; position: relative; flex: none; }
  .fillbox { position: absolute; left: 6px; top: 0; width: 36px; height: 36px; box-sizing: border-box; border: 1px solid #1a1a1a; background: #323232; color: #e0e0e0; font: 700 14px "Liberation Sans", sans-serif; display: flex; align-items: center; justify-content: center; padding: 6px 0 0 6px; }
  .swap { position: absolute; left: 50px; top: 2px; width: 12px; height: 12px; }
  .strokebox, .apstroke { box-sizing: border-box; background: #323232; border: 1px solid #1a1a1a; }
  .strokebox { position: absolute; left: 24px; top: 18px; width: 36px; height: 36px; }
  .strokebox i { position: absolute; left: 9px; top: 9px; width: 18px; height: 18px; box-sizing: border-box; border: 1px solid #1a1a1a; display: block; }
  .q { position: absolute; color: #c8c8c8; font: 700 8px/9px "Liberation Sans", sans-serif; }
  .q1 { left: 2px; top: 2px; } .q2 { right: 2px; top: 2px; } .q3 { left: 2px; bottom: 1px; } .q4 { right: 2px; bottom: 1px; }
  .defaults { position: absolute; left: 6px; top: 40px; width: 12px; height: 12px; }
  .defaults b { position: absolute; left: 0; top: 0; width: 7px; height: 7px; background: #fff; border: 1px solid #000; outline: 1px solid #ccc; z-index: 1; }
  .defaults i { position: absolute; right: 0; bottom: 0; width: 7px; height: 7px; background: #111; border: 1px solid #ccc; }
  .moderow { display: flex; margin-left: 6px; width: 58px; box-sizing: border-box; border: 1px solid #3d3d3d; border-radius: 2px; flex: none; }
  .colors { height: 20px; margin-top: 6px; }
  .draws { height: 18px; margin-top: 5px; }
  .mcell { flex: 1; display: flex; align-items: center; justify-content: center; border-right: 1px solid #3d3d3d; }
  .mcell:last-child { border-right: 0; }
  .mcell.on { background: #242424; }
  .colors svg { width: 12px; height: 12px; outline: 1px solid #000; }
  .draws svg { width: 11px; height: 11px; }
  .m-color { width: 12px; height: 12px; background: #333; border: 2px solid #000; box-sizing: border-box; display: block; outline: 1px solid #000; }
  .m-grad { width: 12px; height: 12px; background: linear-gradient(90deg, #fff, #222); display: block; outline: 1px solid #000; }
  .screen { width: 22px; height: 16px; margin: 9px 0 0 25px; flex: none; }
  .tooldots { margin-top: 21px; padding-left: 29px; }
  .dots { display: flex; gap: 2px; }
  .dots i { width: 3.500px; height: 3.500px; border-radius: 50%; background: #a8a8a8; display: block; }

  /* center */
  .center { width: 1554px; flex: none; display: flex; flex-direction: column; }
  .tabrow { height: 30px; flex: none; background: #262626; box-sizing: border-box; border-bottom: 1px solid #1f1f1f; }
  .tab { width: 274px; height: 29px; background: #323232; color: #c8c8c8; font-size: 11.500px; font-weight: 700; display: flex; align-items: center; white-space: nowrap; box-sizing: border-box; padding-left: 8px; }
  .tabx { font-size: 15px; font-weight: 400; width: 16px; color: #ccc; }
  .stage { flex: 1; display: flex; min-height: 0; }
  .canvas { width: 1536px; flex: none; background: #393939; position: relative; overflow: hidden; }
  .artboard { position: absolute; left: 560px; top: 132px; width: 656px; height: 655px; background: #fff; box-sizing: border-box; outline: 1px solid #000; box-shadow: 0 0 3px rgba(0,0,0,.4); }
  .graph { width: 100%; height: 100%; display: block; }
  .vscroll { width: 16px; flex: none; margin-right: 2px; background: #2a2a2a; position: relative; display: flex; justify-content: center; padding-top: 6px; box-sizing: border-box; }
  .vs-thumb { position: absolute; left: 2px; top: 461px; width: 12px; height: 24px; background: #4a4a4a; border-radius: 6px; }
  .vs-down { position: absolute; left: 4px; bottom: 3px; }

  .status { height: 17px; flex: none; display: flex; align-items: center; background: #2c2c2c; font-size: 11px; color: #c8c8c8; white-space: nowrap; box-sizing: border-box; border-top: 1px solid #282828; }
  .zoombox { width: 51px; margin-left: 3px; height: 100%; background: #282828; box-sizing: border-box; padding: 2px 0 0 4px; }
  .sb-chev { width: 18px; height: 100%; display: flex; align-items: center; justify-content: center; border-left: 1px solid #3d3d3d; }
  .sb-chev.narrow { width: 17px; }
  .nav { height: 9px; fill: #5e5e5e; flex: none; }
  .nav1 { width: 9px; margin-left: 5px; }
  .nav2 { width: 6px; margin-left: 11px; }
  .nav3 { width: 6px; margin-left: 9px; }
  .nav4 { width: 9px; margin-left: 11px; }
  .play { width: 6px; fill: #ccc; margin-left: 6px; }
  .pagebox { width: 41px; margin-left: 7px; height: 100%; background: #282828; box-sizing: border-box; padding: 2px 0 0 4px; }
  .toggle { width: 200px; margin-left: 9px; text-align: center; color: #a8a8a8; background: #333; height: 100%; }
  .hscroll { width: 1096px; margin-left: 8px; display: flex; align-items: center; justify-content: space-between; padding: 0 6px 0 2px; box-sizing: border-box; position: relative; height: 100%; flex: none; }
  .hs-thumb { position: absolute; left: 526px; top: 2px; width: 23px; height: 12px; background: #4a4a4a; border-radius: 6px; }
  .corner { width: 18px; height: 100%; background: #333; flex: none; }

  /* graph window */
  .gw { position: absolute; left: 219px; top: 348px; width: 436px; height: 166px; background: #323232; border-radius: 5px 5px 4px 4px; box-shadow: 0 6px 18px rgba(0,0,0,.35); overflow: hidden; display: flex; flex-direction: column; }
  .gw-title { height: 16px; flex: none; background: linear-gradient(#cdcdcd, #a9a9a9); display: flex; align-items: center; gap: 7px; padding-left: 6px; }
  .gw-title i { width: 11px; height: 11px; border-radius: 50%; display: block; }
  .r { background: #f2544d; } .g0 { background: #d4d4d4; } .g1 { background: #2fc23c; }
  .gw-tools { height: 26px; flex: none; display: flex; }
  .gw-input { width: 279px; height: 25px; background: #282828; border-radius: 0 0 3px 0; }
  .gw-icons { display: flex; padding-left: 2px; }
  .gw-ic { width: 26px; display: flex; align-items: center; justify-content: center; color: #c4c4c4; }
  .gw-ic svg { width: 17px; height: 17px; }
  .dimic { color: #5c5c5c; }
  .gw-body { height: 109px; flex: none; display: flex; }
  .gw-table { width: 422px; display: grid; grid-template-columns: 70px repeat(4, 71px) 68px; grid-auto-rows: 18px; background: #333; overflow: hidden; border-top: 1px solid #272727; box-sizing: border-box; }
  .gcell { border-right: 1px solid #222; border-bottom: 1px solid #222; box-sizing: border-box; color: #dcdcdc; font-size: 13px; line-height: 16px; padding-left: 3px; }
  .gcell:nth-child(6n) { border-right: 0; }
  .gcell.sel { border: 1px solid #1a1a1a; background: #2e2e2e; }
  .gw-v { width: 14px; background: #2c2c2c; position: relative; display: flex; justify-content: center; padding-top: 5px; box-sizing: border-box; }
  .vthumb { position: absolute; left: 1px; top: 14px; width: 12px; height: 25px; background: #4c4c4c; border-radius: 6px; }
  .vdown { position: absolute; left: 3px; bottom: 4px; }
  .gw-foot { flex: 1; display: flex; background: #333; }
  .gw-h { width: 422px; background: #2c2c2c; display: flex; align-items: center; justify-content: space-between; padding: 0 5px 0 4px; box-sizing: border-box; position: relative; }
  .gw-h .side { stroke: #666; }
  .hthumb { position: absolute; left: 14px; top: 1px; width: 25px; height: 12px; background: #4c4c4c; border-radius: 6px; }

  /* dock */
  .dock { width: 39px; flex: none; margin-right: 2px; background: #262626; display: flex; flex-direction: column; }
  .dock .collapsehead { text-align: right; padding: 0 5px 0 0; }
  .dgroup { background: #323232; margin: 1px 1px 0; box-sizing: border-box; padding-top: 4px; flex: none; }
  .dicon { display: flex; align-items: center; justify-content: center; color: #b5b5b5; height: 27.500px; }
  .dicon svg { width: 19px; height: 19px; }

  /* panel */
  .panel { width: 251px; flex: none; background: #323232; display: flex; flex-direction: column; font-size: 11px; }
  .phead { height: 12px; background: #262626; color: #777; text-align: right; padding-right: 6px; font-size: 11px; line-height: 11px; flex: none; box-sizing: border-box; }
  .ptabs { height: 28px; display: flex; background: #262626; flex: none; }
  .ptab { height: 28px; box-sizing: border-box; padding: 0 9px; line-height: 27px; color: #8f8f8f; font-weight: 700; font-size: 11.500px; border-right: 1px solid #1f1f1f; width: 62px; }
  .ptab.on { background: #323232; color: #e6e6e6; width: 70px; }
  .pgraph { height: 32px; line-height: 34px; padding-left: 10px; color: #a0a0a0; font-size: 11.500px; box-sizing: border-box; }
  .psep { height: 2px; width: 238px; background: #282828; flex: none; }
  .sec { padding-left: 10px; position: relative; box-sizing: border-box; }
  .sec h4 { margin: 0; font-weight: 400; font-size: 11.500px; line-height: 17px; color: #a0a0a0; letter-spacing: .2px; }
  .sec .dots { position: absolute; right: 19px; }
  .transform { height: 123px; padding-top: 9px; }
  .transform .dots { bottom: 7px; }
  .tf { display: flex; margin-top: 4px; position: relative; }
  .refpt { width: 19px; height: 19px; margin-top: 14px; flex: none; }
  .tf-col { margin-left: 10px; display: flex; flex-direction: column; gap: 5px; }
  .tf-row { display: flex; align-items: center; height: 21px; }
  .tl { color: #a8a8a8; width: 15px; flex: none; font-size: 11.500px; }
  .wl { width: 18px; margin-left: 14px; }
  .dbox { width: 57px; height: 21px; box-sizing: border-box; background: #3a3a3a; color: #4f4f4f; font-size: 11px; line-height: 19px; padding-left: 6px; border-radius: 2px; flex: none; }
  .w56 { width: 56px; }
  .linkic { width: 15px; height: 17px; margin: 15px 0 0 15px; flex: none; }
  .tf3 { display: flex; align-items: center; height: 21px; margin-top: 5px; position: relative; }
  .angle { width: 15px; height: 9px; margin-left: 25px; margin-top: -4px; flex: none; }
  .colon { width: 8px; text-align: center; margin-top: -3px; }
  .ang { width: 56px; display: flex; align-items: center; justify-content: space-between; padding-right: 4px; }
  .flip { flex: none; }
  .f1 { width: 13px; height: 10px; margin-left: 43px; }
  .f2 { width: 11px; height: 13px; margin-left: 12px; }
  .appearance { height: 170px; padding-top: 9px; }
  .appearance .dots { bottom: 8px; }
  .ap-row { height: 29px; display: flex; align-items: center; }
  .ap-row:first-of-type { margin-top: 5px; }
  .apq { width: 18px; height: 18px; box-sizing: border-box; background: #262626; border: 1px solid #1a1a1a; color: #ddd; font: 700 13px "Liberation Sans", sans-serif; display: flex; align-items: center; justify-content: center; flex: none; }
  .aplab { margin-left: 12px; color: #b0b0b0; font-size: 11px; line-height: 13px; flex: none; }
  .apstroke { width: 18px; height: 18px; position: relative; flex: none; background: #262626; }
  .apstroke .q { font-size: 6px; line-height: 6px; }
  .apstroke .q1, .apstroke .q2 { top: 0; } .apstroke .q3, .apstroke .q4 { bottom: 0; }
  .apstroke .q1, .apstroke .q3 { left: 0; } .apstroke .q2, .apstroke .q4 { right: 0; }
  .apstroke i { position: absolute; left: 4px; top: 4px; width: 8px; height: 8px; border: 1px solid #aaa; display: block; }
  .checker { width: 16px; height: 16px; margin-left: 1px; margin-right: -1px; box-sizing: border-box; border: 1px solid #999; background: repeating-conic-gradient(#4a4a4a 0 25%, #353535 0 50%) 0 0 / 7px 7px; flex: none; }
  .apctl { position: absolute; left: 93px; }
  .fx { height: 38px; display: flex; align-items: center; padding-left: 7px; color: #a8a8a8; font: italic 15px "Liberation Serif", serif; }
  .character { height: 155px; padding-top: 9px; }
  .character .dots { bottom: 7px; }
  .wide { width: 220px; margin-top: 6px; }
  .wide:first-of-type { margin-top: 7px; }
  .wide .val { padding-left: 7px; }
  .chgrid { display: grid; grid-template-columns: 21px 82px 16px 18px 82px; grid-auto-rows: 21px; row-gap: 5px; margin-top: 5px; align-items: center; }
  .chic { width: 18px; height: 17px; }
  .lead { grid-column: 4; }
  .quick { padding-top: 11px; }
  .qa-row { display: flex; gap: 11px; margin-top: 7px; }
  button { width: 108px; height: 21px; padding: 0; background: #323232; border: 1px solid #4a4a4a; border-radius: 2px; color: #c0c0c0; font: 11px "Lato", "Open Sans", sans-serif; }
  .full { width: 227px; margin-top: 10px; display: block; }
</style>
